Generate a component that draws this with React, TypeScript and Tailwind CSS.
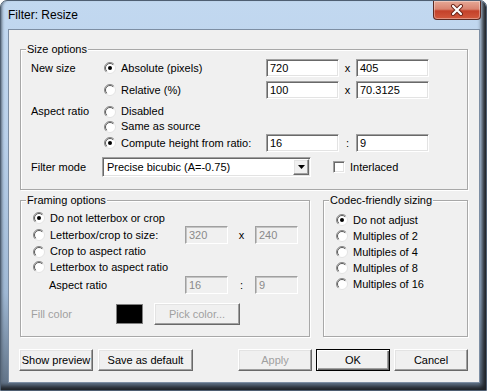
import React from 'react';

const raised =
  'border border-t-white border-l-white border-r-[#696969] border-b-[#696969] shadow-[inset_-1px_-1px_0_#a0a0a0,inset_1px_1px_0_#e3e3e3]';

function Radio({ label, checked = false, className = '' }: { label: string; checked?: boolean; className?: string }) {
  return (
    <div className={`flex items-center gap-[4px] ${className}`}>
      <svg width="13" height="12" viewBox="0 0 13 12" className="shrink-0">
        <circle cx="6" cy="6" r="5.5" fill="#fff" stroke="#e3e3e3" />
        <path d="M2.1 9.9 A5.5 5.5 0 0 1 9.9 2.1" fill="none" stroke="#8a8a8a" />
        <path d="M2.8 9.2 A4.5 4.5 0 0 1 9.2 2.8" fill="none" stroke="#5a5a5a" />
        {checked && <circle cx="6" cy="6" r="2" fill="#000" />}
      </svg>
      <span className="whitespace-nowrap">{label}</span>
    </div>
  );
}

function Field({ value, w, disabled = false }: { value: string; w: string; disabled?: boolean }) {
  return (
    <div
      className={`${w} h-[18px] shrink-0 pl-[3px] leading-[16px] border border-t-[#a0a0a0] border-l-[#a0a0a0] border-r-white border-b-white ${
        disabled
          ? 'bg-[#f0f0f0] text-[#8a8a8a] shadow-[inset_1px_1px_0_#c4c4c4]'
          : 'bg-white shadow-[inset_1px_1px_0_#696969,inset_-1px_-1px_0_#e3e3e3]'
      }`}
    >
      {value}
    </div>
  );
}

function Button({ label, w, disabled = false, isDefault = false }: { label: string; w: string; disabled?: boolean; isDefault?: boolean }) {
  return (
    <div
      className={`${w} h-[22px] shrink-0 flex items-center justify-center bg-[#f0f0f0] ${
        isDefault
          ? 'border border-black shadow-[inset_1px_1px_0_#fff,inset_-1px_-1px_0_#696969,inset_-2px_-2px_0_#a0a0a0]'
          : raised
      } ${disabled ? 'text-[#a0a0a0]' : 'text-black'}`}
    >
      {label}
    </div>
  );
}

function Group({ title, className = '', children }: { title: string; className?: string; children: React.ReactNode }) {
  return (
    <div className={`relative border border-[#a8a8a8] shadow-[inset_1px_1px_0_#fff,1px_1px_0_#fff] ${className}`}>
      <span className="absolute -top-[8px] left-[5px] px-[1px] bg-[#f0f0f0] leading-[14px] whitespace-nowrap">{title}</span>
      {children}
    </div>
  );
}

export default function App() {
  return (
    <div className="w-[487px] h-[391px] flex flex-col overflow-hidden rounded-t-[7px] border border-[#4f5f72] bg-[linear-gradient(180deg,#c2d8f0_0%,#b9d0ea_35%,#9fb8d4_75%,#5d6e82_100%)] shadow-[inset_-5px_-5px_4px_-1px_#1f2328,inset_3px_0_3px_-2px_#5a6878]">
      {/* Title bar */}
      <div className="h-[28px] flex items-start justify-between pl-[7px] pr-[5px]">
        <span className="pt-[7px] leading-[15px] text-[12px] text-black font-['Liberation_Sans',Arial,sans-serif]">Filter: Resize</span>
        <div className="w-[48px] h-[19px] rounded-b-[4px] border border-t-0 border-[#5d2a22] bg-[linear-gradient(180deg,#e6a896_0%,#d98470_45%,#c4412a_55%,#d2593d_100%)] shadow-[inset_0_0_0_1px_rgba(255,255,255,0.35)] flex items-center justify-center">
          <svg width="14" height="12" viewBox="0 0 14 12">
            <path d="M3 2 L11 10 M11 2 L3 10" stroke="#6b2418" strokeWidth="4" strokeLinecap="round" />
            <path d="M3 2 L11 10 M11 2 L3 10" stroke="#fff" strokeWidth="2.2" strokeLinecap="round" />
          </svg>
        </div>
      </div>

      {/* Client area */}
      <div className="flex-1 ml-[7px] mr-[6px] mb-[7px] border border-[#7d8ea3] bg-[#f0f0f0] px-[11px] pt-[19px] text-[11px] text-black font-['Liberation_Sans',Arial,sans-serif] leading-[15px]">
        <Group title="Size options" className="h-[141px]">
          <div className="pt-[9px] pl-[10px] flex flex-col">
            <div className="flex items-center h-[18px]">
              <span className="w-[73px]">New size</span>
              <Radio checked label="Absolute (pixels)" className="w-[162px]" />
              <Field value="720" w="w-[73px]" />
              <span className="w-[17px] text-center">x</span>
              <Field value="405" w="w-[73px]" />
            </div>
            <div className="flex items-center h-[18px] mt-[4px]">
              <span className="w-[73px]" />
              <Radio label="Relative (%)" className="w-[162px]" />
              <Field value="100" w="w-[73px]" />
              <span className="w-[17px] text-center">x</span>
              <Field value="70.3125" w="w-[73px]" />
            </div>
            <div className="flex mt-[5px]">
              <span className="w-[73px] h-[15px]">Aspect ratio</span>
              <div className="flex flex-col">
                <Radio label="Disabled" className="h-[15px]" />
                <Radio label="Same as source" className="h-[15px]" />
                <div className="flex items-center h-[18px]">
                  <Radio checked label="Compute height from ratio:" className="w-[162px]" />
                  <Field value="16" w="w-[73px]" />
                  <span className="w-[17px] text-center">:</span>
                  <Field value="9" w="w-[73px]" />
                </div>
              </div>
            </div>
            <div className="flex items-center h-[20px] mt-[5px]">
              <span className="w-[71px]">Filter mode</span>
              <div className="w-[209px] h-[20px] flex items-center bg-white border border-t-[#a0a0a0] border-l-[#a0a0a0] border-r-white border-b-white shadow-[inset_1px_1px_0_#696969,inset_-1px_-1px_0_#e3e3e3] p-[1px]">
                <span className="flex-1 pl-[3px]">Precise bicubic (A=-0.75)</span>
                <div className={`w-[16px] h-[16px] bg-[#f0f0f0] flex items-center justify-center ${raised}`}>
                  <svg width="7" height="4" viewBox="0 0 7 4">
                    <path d="M0 0 H7 L3.5 4 Z" fill="#000" />
                  </svg>
                </div>
              </div>
              <div className="ml-[22px] w-[12px] h-[12px] bg-white border border-t-[#a0a0a0] border-l-[#a0a0a0] border-r-white border-b-white shadow-[inset_1px_1px_0_#696969,inset_-1px_-1px_0_#e3e3e3]" />
              <span className="ml-[5px]">Interlaced</span>
            </div>
          </div>
        </Group>

        <div className="flex gap-[13px] mt-[10px]">
          <Group title="Framing options" className="w-[290px] h-[137px]">
            <div className="pt-[9px] pl-[12px] flex flex-col">
              <Radio checked label="Do not letterbox or crop" className="h-[16px]" />
              <div className="flex items-center h-[18px]">
                <Radio label="Letterbox/crop to size:" className="w-[152px]" />
                <Field value="320" w="w-[43px]" disabled />
                <span className="w-[27px] text-center">x</span>
                <Field value="240" w="w-[43px]" disabled />
              </div>
              <Radio label="Crop to aspect ratio" className="h-[15px]" />
              <Radio label="Letterbox to aspect ratio" className="h-[16px]" />
              <div className="flex items-center h-[18px] mt-[1px]">
                <span className="w-[152px] pl-[16px]">Aspect ratio</span>
                <Field value="16" w="w-[43px]" disabled />
                <span className="w-[27px] text-center">:</span>
                <Field value="9" w="w-[43px]" disabled />
              </div>
              <div className="flex items-center h-[22px] mt-[9px] -ml-[2px]">
                <span className="w-[85px] text-[#a0a0a0]">Fill color</span>
                <div className="w-[27px] h-[20px] bg-black border border-[#808080]" />
                <div className="ml-[11px]">
                  <Button label="Pick color..." w="w-[86px]" disabled />
                </div>
              </div>
            </div>
          </Group>

          <Group title="Codec-friendly sizing" className="flex-1 h-[137px]">
            <div className="pt-[11px] pl-[12px] flex flex-col">
              <Radio checked label="Do not adjust" className="h-[16px]" />
              <Radio label="Multiples of 2" className="h-[16px]" />
              <Radio label="Multiples of 4" className="h-[16px]" />
              <Radio label="Multiples of 8" className="h-[16px]" />
              <Radio label="Multiples of 16" className="h-[16px]" />
            </div>
          </Group>
        </div>

        <div className="flex items-center mt-[12px] -ml-[1px]">
          <Button label="Show preview" w="w-[74px]" />
          <div className="ml-[5px]">
            <Button label="Save as default" w="w-[95px]" />
          </div>
          <div className="flex-1" />
          <div className="flex gap-[4px]">
            <Button label="Apply" w="w-[74px]" disabled />
            <Button label="OK" w="w-[74px]" isDefault />
            <Button label="Cancel" w="w-[74px]" />
          </div>
        </div>
      </div>
    </div>
  );
}
